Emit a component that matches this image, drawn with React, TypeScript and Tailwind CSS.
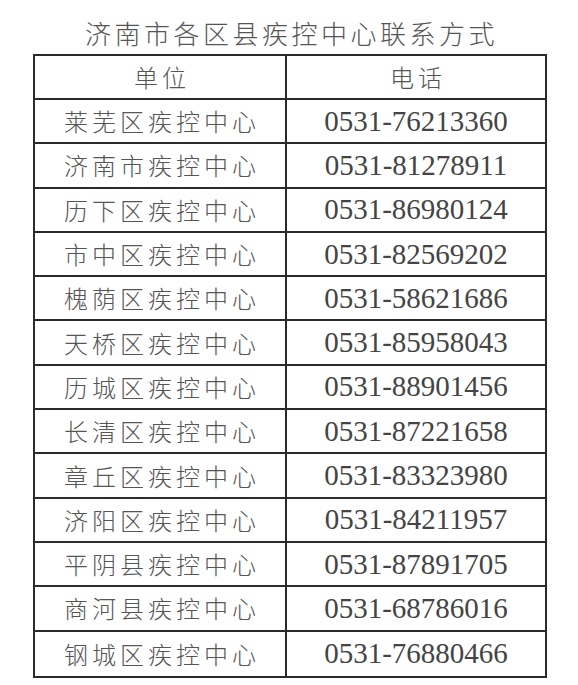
import React from "react";

const rows: [string, string][] = [
  ["莱芜区疾控中心", "0531-76213360"],
  ["济南市疾控中心", "0531-81278911"],
  ["历下区疾控中心", "0531-86980124"],
  ["市中区疾控中心", "0531-82569202"],
  ["槐荫区疾控中心", "0531-58621686"],
  ["天桥区疾控中心", "0531-85958043"],
  ["历城区疾控中心", "0531-88901456"],
  ["长清区疾控中心", "0531-87221658"],
  ["章丘区疾控中心", "0531-83323980"],
  ["济阳区疾控中心", "0531-84211957"],
  ["平阴县疾控中心", "0531-87891705"],
  ["商河县疾控中心", "0531-68786016"],
  ["钢城区疾控中心", "0531-76880466"],
];

const cjk = "font-['Noto_Sans_CJK_SC',sans-serif]";
const num = "font-['Liberation_Serif','Noto_Sans_CJK_SC',serif]";

export default function App() {
  return (
    <div className="w-[578px] h-[685px] bg-white">
      <div className="pl-[33px]">
        <div
          className={`w-[514px] h-[54px] pt-[12px] pl-[3px] flex items-center justify-center text-[26px] leading-none tracking-[3.5px] text-[#555] font-light ${cjk}`}
        >
          济南市各区县疾控中心联系方式
        </div>
        <div className="w-[514px] border-2 border-[#2a2a2a] flex flex-col">
          <div className="flex h-[44px] border-b-2 border-[#2a2a2a]">
            <div
              className={`w-[252px] border-r-2 border-[#2a2a2a] flex items-center justify-center pl-[4px] text-[24px] leading-none tracking-[4px] text-[#555] font-light ${cjk}`}
            >
              单位
            </div>
            <div
              className={`flex-1 flex items-center justify-center pl-[4px] text-[24px] leading-none tracking-[4px] text-[#555] font-light ${cjk}`}
            >
              电话
            </div>
          </div>
          {rows.map(([name, phone], i) => (
            <div
              key={name}
              className={`flex h-[44.3px] ${i < rows.length - 1 ? "border-b-2 border-[#2a2a2a]" : ""}`}
            >
              <div
                className={`w-[252px] border-r-2 border-[#2a2a2a] flex items-center justify-center pl-[4px] text-[24px] leading-none tracking-[4px] text-[#555] font-light ${cjk}`}
              >
                {name}
              </div>
              <div
                className={`flex-1 flex items-center justify-center text-[29px] leading-none text-[#444] ${num}`}
              >
                {phone}
              </div>
            </div>
          ))}
        </div>
      </div>
    </div>
  );
}
